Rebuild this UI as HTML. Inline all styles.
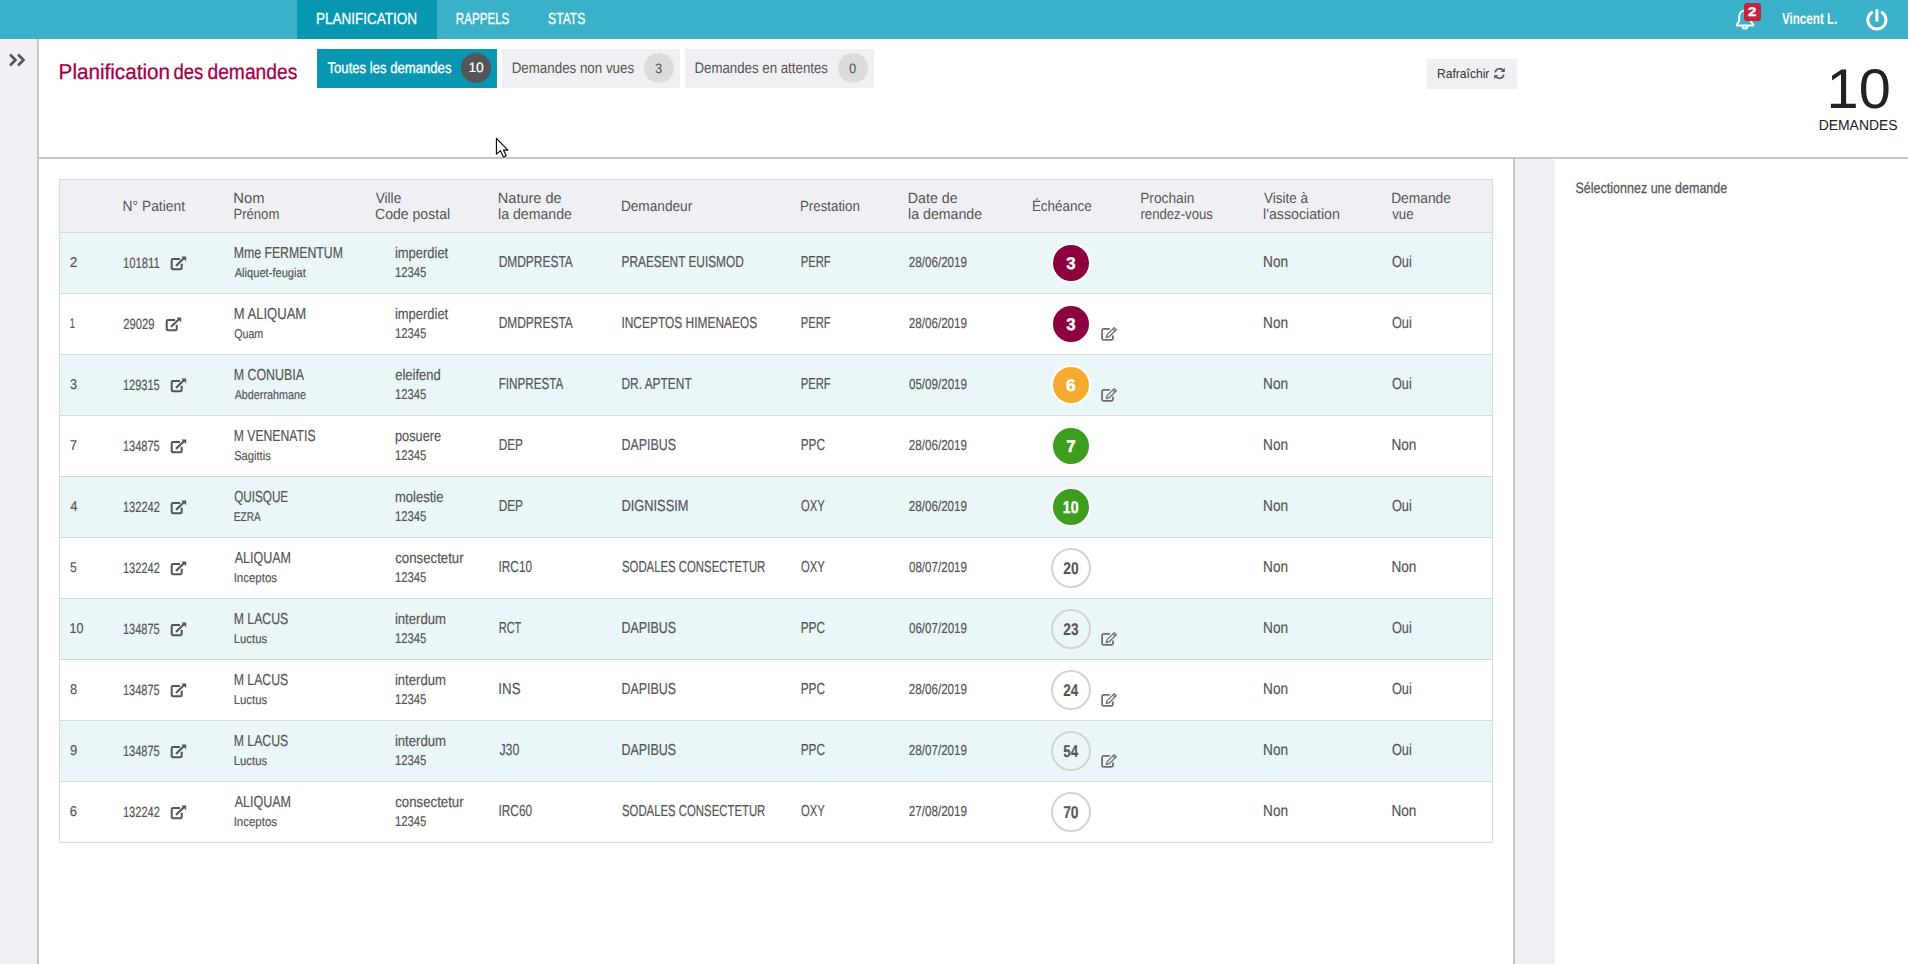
<!DOCTYPE html>
<html><head><meta charset="utf-8"><style>
html,body{margin:0;padding:0;}
body{width:1908px;height:964px;position:relative;overflow:hidden;background:#fff;font-family:"Liberation Sans",sans-serif;}
.b{position:absolute;}
svg.txt{position:absolute;left:0;top:0;}
svg.txt text{font-family:"Liberation Sans",sans-serif;text-rendering:geometricPrecision;}
</style></head><body>
<div class="b" style="left:0px;top:0px;width:1908px;height:39px;background:#3ab1c8;"></div>
<div class="b" style="left:297px;top:0px;width:140px;height:39px;background:#0897b1;"></div>
<div class="b" style="left:0px;top:39px;width:37px;height:925px;background:#f0f0f4;"></div>
<div class="b" style="left:37px;top:39px;width:2px;height:925px;background:#c6c6c6;"></div>
<div class="b" style="left:39px;top:157px;width:1869px;height:2px;background:#c6c6c6;"></div>
<div class="b" style="left:1513px;top:159px;width:2px;height:805px;background:#c6c6c6;"></div>
<div class="b" style="left:1515px;top:159px;width:40px;height:805px;background:#f0f0f4;"></div>
<div class="b" style="left:317px;top:49px;width:180px;height:39px;background:#0897b1;"></div>
<div class="b" style="left:461px;top:53px;width:30px;height:30px;background:#555;border-radius:50%;"></div>
<div class="b" style="left:502px;top:49px;width:178px;height:39px;background:#f0f0f4;"></div>
<div class="b" style="left:644px;top:53px;width:30px;height:30px;background:#dcdcdc;border-radius:50%;"></div>
<div class="b" style="left:685px;top:49px;width:189px;height:39px;background:#f0f0f4;"></div>
<div class="b" style="left:838px;top:53px;width:30px;height:30px;background:#dcdcdc;border-radius:50%;"></div>
<div class="b" style="left:1427px;top:59px;width:90px;height:30px;background:#f0f0f4;"></div>
<div class="b" style="left:59px;top:179px;width:1434px;height:664px;background:#fff;border:1px solid #d8d8dc;box-sizing:border-box;"></div>
<div class="b" style="left:60px;top:180px;width:1432px;height:53px;background:#f0f0f4;"></div>
<div class="b" style="left:60px;top:232px;width:1432px;height:1px;background:#dadadc;"></div>
<div class="b" style="left:60px;top:233px;width:1432px;height:60px;background:#eaf6f7;"></div>
<div class="b" style="left:60px;top:293px;width:1432px;height:1px;background:#d6d9dc;"></div>
<div class="b" style="left:1051px;top:242.7px;width:40px;height:40px;background:#8d003f;border-radius:50%;border:2px solid #fff;box-sizing:border-box;"></div>
<div class="b" style="left:60px;top:354px;width:1432px;height:1px;background:#d6d9dc;"></div>
<div class="b" style="left:1051px;top:303.7px;width:40px;height:40px;background:#8d003f;border-radius:50%;border:2px solid #fff;box-sizing:border-box;"></div>
<div class="b" style="left:60px;top:355px;width:1432px;height:60px;background:#eaf6f7;"></div>
<div class="b" style="left:60px;top:415px;width:1432px;height:1px;background:#d6d9dc;"></div>
<div class="b" style="left:1051px;top:364.7px;width:40px;height:40px;background:#f5ab2f;border-radius:50%;border:2px solid #fff;box-sizing:border-box;"></div>
<div class="b" style="left:60px;top:476px;width:1432px;height:1px;background:#d6d9dc;"></div>
<div class="b" style="left:1051px;top:425.7px;width:40px;height:40px;background:#3c9d1f;border-radius:50%;border:2px solid #fff;box-sizing:border-box;"></div>
<div class="b" style="left:60px;top:477px;width:1432px;height:60px;background:#eaf6f7;"></div>
<div class="b" style="left:60px;top:537px;width:1432px;height:1px;background:#d6d9dc;"></div>
<div class="b" style="left:1051px;top:486.7px;width:40px;height:40px;background:#3c9d1f;border-radius:50%;border:2px solid #fff;box-sizing:border-box;"></div>
<div class="b" style="left:60px;top:598px;width:1432px;height:1px;background:#d6d9dc;"></div>
<div class="b" style="left:1051px;top:547.7px;width:40px;height:40px;background:transparent;border-radius:50%;border:2px solid #d3d3d3;box-sizing:border-box;"></div>
<div class="b" style="left:60px;top:599px;width:1432px;height:60px;background:#eaf6f7;"></div>
<div class="b" style="left:60px;top:659px;width:1432px;height:1px;background:#d6d9dc;"></div>
<div class="b" style="left:1051px;top:608.7px;width:40px;height:40px;background:transparent;border-radius:50%;border:2px solid #d3d3d3;box-sizing:border-box;"></div>
<div class="b" style="left:60px;top:720px;width:1432px;height:1px;background:#d6d9dc;"></div>
<div class="b" style="left:1051px;top:669.7px;width:40px;height:40px;background:transparent;border-radius:50%;border:2px solid #d3d3d3;box-sizing:border-box;"></div>
<div class="b" style="left:60px;top:721px;width:1432px;height:60px;background:#eaf6f7;"></div>
<div class="b" style="left:60px;top:781px;width:1432px;height:1px;background:#d6d9dc;"></div>
<div class="b" style="left:1051px;top:730.7px;width:40px;height:40px;background:transparent;border-radius:50%;border:2px solid #d3d3d3;box-sizing:border-box;"></div>
<div class="b" style="left:1051px;top:791.7px;width:40px;height:40px;background:transparent;border-radius:50%;border:2px solid #d3d3d3;box-sizing:border-box;"></div>
<svg class="b" style="left:1733px;top:5px" width="24" height="25" viewBox="0 0 24 25">
<path d="M12 5.5c-3.6 0-5.8 2.8-5.8 6.3v4.6l-2.4 3.1v1h16.4v-1l-2.4-3.1v-4.6c0-3.5-2.2-6.3-5.8-6.3z" fill="none" stroke="#fff" stroke-width="2" stroke-linejoin="round"/>
<path d="M9.6 21.2a2.4 2.4 0 0 0 4.8 0" fill="none" stroke="#fff" stroke-width="2"/>
</svg>
<div class="b" style="left:1744px;top:3px;width:17px;height:18px;background:#c8203f;border-radius:3px;"></div>
<svg class="b" style="left:1865px;top:8px" width="24" height="24" viewBox="0 0 24 24">
<path d="M6.7 4.5a9.1 9.1 0 1 0 10.4 0" fill="none" stroke="#fff" stroke-width="3" stroke-linecap="round"/>
<line x1="11.9" y1="2.4" x2="11.9" y2="12.2" stroke="#fff" stroke-width="3" stroke-linecap="round"/>
</svg>
<svg class="b" style="left:7px;top:52px" width="20" height="16" viewBox="0 0 20 16">
<path d="M3 2.5l5.5 5.5-5.5 5.5M11 2.5l5.5 5.5-5.5 5.5" fill="none" stroke="#555" stroke-width="2.6"/>
</svg>
<svg class="b" style="left:1493px;top:67px" width="13" height="13" viewBox="0 0 13 13">
<path d="M2.2 5.4A4.4 4.4 0 0 1 10.2 3.6" fill="none" stroke="#555" stroke-width="1.7"/>
<path d="M11.8 1v4h-4z" fill="#555"/>
<path d="M10.8 7.6A4.4 4.4 0 0 1 2.8 9.4" fill="none" stroke="#555" stroke-width="1.7"/>
<path d="M1.2 12v-4h4z" fill="#555"/>
</svg>
<svg class="b" style="left:169.0px;top:256.0px" width="18" height="16" viewBox="0 0 18 16">
<path d="M11 3H3.9a1.2 1.2 0 0 0-1.2 1.2V12a1.2 1.2 0 0 0 1.2 1.2h7.6A1.2 1.2 0 0 0 12.7 12V7.7" fill="none" stroke="#555" stroke-width="2"/>
<path d="M7.6 9.3L14.6 2.4" stroke="#555" stroke-width="2.1" stroke-linecap="round"/>
<path d="M12.4 0.5H17.2V5.3Z" fill="#555"/>
</svg>
<svg class="b" style="left:163.7px;top:317.0px" width="18" height="16" viewBox="0 0 18 16">
<path d="M11 3H3.9a1.2 1.2 0 0 0-1.2 1.2V12a1.2 1.2 0 0 0 1.2 1.2h7.6A1.2 1.2 0 0 0 12.7 12V7.7" fill="none" stroke="#555" stroke-width="2"/>
<path d="M7.6 9.3L14.6 2.4" stroke="#555" stroke-width="2.1" stroke-linecap="round"/>
<path d="M12.4 0.5H17.2V5.3Z" fill="#555"/>
</svg>
<svg class="b" style="left:1099.2px;top:326.0px" width="18" height="16" viewBox="0 0 18 16">
<path d="M10.8 2.9H4.6a1.5 1.5 0 0 0-1.5 1.5v7.9a1.5 1.5 0 0 0 1.5 1.5h7.9a1.5 1.5 0 0 0 1.5-1.5V9.4" fill="none" stroke="#707070" stroke-width="1.8"/>
<path d="M8.1 8.6L15.2 1.6L17.3 3.7L10.2 10.7L7.3 11.5Z" fill="none" stroke="#707070" stroke-width="1.3" stroke-linejoin="round"/>
<path d="M13.9 3L16 5.1" stroke="#707070" stroke-width="1.1"/>
</svg>
<svg class="b" style="left:169.0px;top:378.0px" width="18" height="16" viewBox="0 0 18 16">
<path d="M11 3H3.9a1.2 1.2 0 0 0-1.2 1.2V12a1.2 1.2 0 0 0 1.2 1.2h7.6A1.2 1.2 0 0 0 12.7 12V7.7" fill="none" stroke="#555" stroke-width="2"/>
<path d="M7.6 9.3L14.6 2.4" stroke="#555" stroke-width="2.1" stroke-linecap="round"/>
<path d="M12.4 0.5H17.2V5.3Z" fill="#555"/>
</svg>
<svg class="b" style="left:1099.2px;top:387.0px" width="18" height="16" viewBox="0 0 18 16">
<path d="M10.8 2.9H4.6a1.5 1.5 0 0 0-1.5 1.5v7.9a1.5 1.5 0 0 0 1.5 1.5h7.9a1.5 1.5 0 0 0 1.5-1.5V9.4" fill="none" stroke="#707070" stroke-width="1.8"/>
<path d="M8.1 8.6L15.2 1.6L17.3 3.7L10.2 10.7L7.3 11.5Z" fill="none" stroke="#707070" stroke-width="1.3" stroke-linejoin="round"/>
<path d="M13.9 3L16 5.1" stroke="#707070" stroke-width="1.1"/>
</svg>
<svg class="b" style="left:169.0px;top:439.0px" width="18" height="16" viewBox="0 0 18 16">
<path d="M11 3H3.9a1.2 1.2 0 0 0-1.2 1.2V12a1.2 1.2 0 0 0 1.2 1.2h7.6A1.2 1.2 0 0 0 12.7 12V7.7" fill="none" stroke="#555" stroke-width="2"/>
<path d="M7.6 9.3L14.6 2.4" stroke="#555" stroke-width="2.1" stroke-linecap="round"/>
<path d="M12.4 0.5H17.2V5.3Z" fill="#555"/>
</svg>
<svg class="b" style="left:169.0px;top:500.0px" width="18" height="16" viewBox="0 0 18 16">
<path d="M11 3H3.9a1.2 1.2 0 0 0-1.2 1.2V12a1.2 1.2 0 0 0 1.2 1.2h7.6A1.2 1.2 0 0 0 12.7 12V7.7" fill="none" stroke="#555" stroke-width="2"/>
<path d="M7.6 9.3L14.6 2.4" stroke="#555" stroke-width="2.1" stroke-linecap="round"/>
<path d="M12.4 0.5H17.2V5.3Z" fill="#555"/>
</svg>
<svg class="b" style="left:169.0px;top:561.0px" width="18" height="16" viewBox="0 0 18 16">
<path d="M11 3H3.9a1.2 1.2 0 0 0-1.2 1.2V12a1.2 1.2 0 0 0 1.2 1.2h7.6A1.2 1.2 0 0 0 12.7 12V7.7" fill="none" stroke="#555" stroke-width="2"/>
<path d="M7.6 9.3L14.6 2.4" stroke="#555" stroke-width="2.1" stroke-linecap="round"/>
<path d="M12.4 0.5H17.2V5.3Z" fill="#555"/>
</svg>
<svg class="b" style="left:169.0px;top:622.0px" width="18" height="16" viewBox="0 0 18 16">
<path d="M11 3H3.9a1.2 1.2 0 0 0-1.2 1.2V12a1.2 1.2 0 0 0 1.2 1.2h7.6A1.2 1.2 0 0 0 12.7 12V7.7" fill="none" stroke="#555" stroke-width="2"/>
<path d="M7.6 9.3L14.6 2.4" stroke="#555" stroke-width="2.1" stroke-linecap="round"/>
<path d="M12.4 0.5H17.2V5.3Z" fill="#555"/>
</svg>
<svg class="b" style="left:1099.2px;top:631.0px" width="18" height="16" viewBox="0 0 18 16">
<path d="M10.8 2.9H4.6a1.5 1.5 0 0 0-1.5 1.5v7.9a1.5 1.5 0 0 0 1.5 1.5h7.9a1.5 1.5 0 0 0 1.5-1.5V9.4" fill="none" stroke="#707070" stroke-width="1.8"/>
<path d="M8.1 8.6L15.2 1.6L17.3 3.7L10.2 10.7L7.3 11.5Z" fill="none" stroke="#707070" stroke-width="1.3" stroke-linejoin="round"/>
<path d="M13.9 3L16 5.1" stroke="#707070" stroke-width="1.1"/>
</svg>
<svg class="b" style="left:169.0px;top:683.0px" width="18" height="16" viewBox="0 0 18 16">
<path d="M11 3H3.9a1.2 1.2 0 0 0-1.2 1.2V12a1.2 1.2 0 0 0 1.2 1.2h7.6A1.2 1.2 0 0 0 12.7 12V7.7" fill="none" stroke="#555" stroke-width="2"/>
<path d="M7.6 9.3L14.6 2.4" stroke="#555" stroke-width="2.1" stroke-linecap="round"/>
<path d="M12.4 0.5H17.2V5.3Z" fill="#555"/>
</svg>
<svg class="b" style="left:1099.2px;top:692.0px" width="18" height="16" viewBox="0 0 18 16">
<path d="M10.8 2.9H4.6a1.5 1.5 0 0 0-1.5 1.5v7.9a1.5 1.5 0 0 0 1.5 1.5h7.9a1.5 1.5 0 0 0 1.5-1.5V9.4" fill="none" stroke="#707070" stroke-width="1.8"/>
<path d="M8.1 8.6L15.2 1.6L17.3 3.7L10.2 10.7L7.3 11.5Z" fill="none" stroke="#707070" stroke-width="1.3" stroke-linejoin="round"/>
<path d="M13.9 3L16 5.1" stroke="#707070" stroke-width="1.1"/>
</svg>
<svg class="b" style="left:169.0px;top:744.0px" width="18" height="16" viewBox="0 0 18 16">
<path d="M11 3H3.9a1.2 1.2 0 0 0-1.2 1.2V12a1.2 1.2 0 0 0 1.2 1.2h7.6A1.2 1.2 0 0 0 12.7 12V7.7" fill="none" stroke="#555" stroke-width="2"/>
<path d="M7.6 9.3L14.6 2.4" stroke="#555" stroke-width="2.1" stroke-linecap="round"/>
<path d="M12.4 0.5H17.2V5.3Z" fill="#555"/>
</svg>
<svg class="b" style="left:1099.2px;top:753.0px" width="18" height="16" viewBox="0 0 18 16">
<path d="M10.8 2.9H4.6a1.5 1.5 0 0 0-1.5 1.5v7.9a1.5 1.5 0 0 0 1.5 1.5h7.9a1.5 1.5 0 0 0 1.5-1.5V9.4" fill="none" stroke="#707070" stroke-width="1.8"/>
<path d="M8.1 8.6L15.2 1.6L17.3 3.7L10.2 10.7L7.3 11.5Z" fill="none" stroke="#707070" stroke-width="1.3" stroke-linejoin="round"/>
<path d="M13.9 3L16 5.1" stroke="#707070" stroke-width="1.1"/>
</svg>
<svg class="b" style="left:169.0px;top:805.0px" width="18" height="16" viewBox="0 0 18 16">
<path d="M11 3H3.9a1.2 1.2 0 0 0-1.2 1.2V12a1.2 1.2 0 0 0 1.2 1.2h7.6A1.2 1.2 0 0 0 12.7 12V7.7" fill="none" stroke="#555" stroke-width="2"/>
<path d="M7.6 9.3L14.6 2.4" stroke="#555" stroke-width="2.1" stroke-linecap="round"/>
<path d="M12.4 0.5H17.2V5.3Z" fill="#555"/>
</svg>
<svg class="b" style="left:495px;top:137px" width="16" height="22" viewBox="0 0 16 22">
<path d="M1.4 1.3V17.2L5.5 13.7L8.5 19.9L11.3 18.7L8.4 13.1H12.9Z" fill="#fff" stroke="#000" stroke-width="1.1" stroke-linejoin="round"/>
</svg>
<svg class="txt" width="1908" height="964" viewBox="0 0 1908 964">
<text x="316.10" y="24.30" font-size="16.00" fill="#fff" textLength="100.99" lengthAdjust="spacingAndGlyphs" stroke="#fff" stroke-width="0.30">PLANIFICATION</text>
<text x="455.85" y="24.30" font-size="16.00" fill="#fff" textLength="53.48" lengthAdjust="spacingAndGlyphs" stroke="#fff" stroke-width="0.30">RAPPELS</text>
<text x="548.08" y="24.30" font-size="16.00" fill="#fff" textLength="37.26" lengthAdjust="spacingAndGlyphs" stroke="#fff" stroke-width="0.30">STATS</text>
<text x="1748.08" y="15.80" font-size="12.50" fill="#fff" textLength="8.32" lengthAdjust="spacingAndGlyphs" font-weight="bold" stroke="#fff" stroke-width="0.50">2</text>
<text x="1781.92" y="24.10" font-size="16.00" fill="#fff" textLength="55.58" lengthAdjust="spacingAndGlyphs" font-weight="bold">Vincent L.</text>
<text x="58.61" y="78.90" font-size="21.50" fill="#a3004a" textLength="111.33" lengthAdjust="spacingAndGlyphs" stroke="#a3004a" stroke-width="0.30">Planification</text>
<text x="173.42" y="78.90" font-size="21.50" fill="#a3004a" textLength="29.85" lengthAdjust="spacingAndGlyphs" stroke="#a3004a" stroke-width="0.30">des</text>
<text x="207.49" y="78.90" font-size="21.50" fill="#a3004a" textLength="89.80" lengthAdjust="spacingAndGlyphs" stroke="#a3004a" stroke-width="0.30">demandes</text>
<text x="327.51" y="72.90" font-size="15.50" fill="#fff" textLength="123.96" lengthAdjust="spacingAndGlyphs" stroke="#fff" stroke-width="0.35">Toutes les demandes</text>
<text x="468.45" y="72.30" font-size="13.50" fill="#fff" textLength="15.39" lengthAdjust="spacingAndGlyphs" stroke="#fff" stroke-width="0.20">10</text>
<text x="511.71" y="72.90" font-size="15.30" fill="#555" textLength="122.38" lengthAdjust="spacingAndGlyphs">Demandes non vues</text>
<text x="655.00" y="72.50" font-size="13.50" fill="#555" textLength="7.27" lengthAdjust="spacingAndGlyphs">3</text>
<text x="694.41" y="72.90" font-size="15.30" fill="#555" textLength="133.57" lengthAdjust="spacingAndGlyphs">Demandes en attentes</text>
<text x="848.99" y="72.50" font-size="13.50" fill="#555" textLength="7.21" lengthAdjust="spacingAndGlyphs">0</text>
<text x="1437.01" y="78.00" font-size="13.00" fill="#333" textLength="52.39" lengthAdjust="spacingAndGlyphs">Rafraîchir</text>
<text x="1826.60" y="108.00" font-size="56.00" fill="#222" textLength="64.26" lengthAdjust="spacingAndGlyphs">10</text>
<text x="1818.66" y="130.00" font-size="14.50" fill="#222" textLength="78.98" lengthAdjust="spacingAndGlyphs">DEMANDES</text>
<text x="1575.43" y="192.70" font-size="15.00" fill="#555" textLength="151.83" lengthAdjust="spacingAndGlyphs" stroke="#555" stroke-width="0.25">Sélectionnez une demande</text>
<text x="122.57" y="211.20" font-size="14.80" fill="#555" textLength="62.44" lengthAdjust="spacingAndGlyphs">N° Patient</text>
<text x="233.29" y="203.30" font-size="14.80" fill="#555" textLength="31.19" lengthAdjust="spacingAndGlyphs">Nom</text>
<text x="233.42" y="219.30" font-size="14.80" fill="#555" textLength="45.94" lengthAdjust="spacingAndGlyphs">Prénom</text>
<text x="375.64" y="203.30" font-size="14.80" fill="#555" textLength="25.66" lengthAdjust="spacingAndGlyphs">Ville</text>
<text x="374.98" y="219.30" font-size="14.80" fill="#555" textLength="75.16" lengthAdjust="spacingAndGlyphs">Code postal</text>
<text x="497.81" y="203.30" font-size="14.80" fill="#555" textLength="63.84" lengthAdjust="spacingAndGlyphs">Nature de</text>
<text x="498.05" y="219.30" font-size="14.80" fill="#555" textLength="73.88" lengthAdjust="spacingAndGlyphs">la demande</text>
<text x="620.88" y="211.20" font-size="14.80" fill="#555" textLength="71.35" lengthAdjust="spacingAndGlyphs">Demandeur</text>
<text x="799.91" y="211.20" font-size="14.80" fill="#555" textLength="59.96" lengthAdjust="spacingAndGlyphs">Prestation</text>
<text x="907.83" y="203.30" font-size="14.80" fill="#555" textLength="49.80" lengthAdjust="spacingAndGlyphs">Date de</text>
<text x="908.04" y="219.30" font-size="14.80" fill="#555" textLength="74.09" lengthAdjust="spacingAndGlyphs">la demande</text>
<text x="1031.90" y="211.20" font-size="14.80" fill="#555" textLength="59.90" lengthAdjust="spacingAndGlyphs">Échéance</text>
<text x="1140.17" y="203.30" font-size="14.80" fill="#555" textLength="54.32" lengthAdjust="spacingAndGlyphs">Prochain</text>
<text x="1140.42" y="219.30" font-size="14.80" fill="#555" textLength="72.55" lengthAdjust="spacingAndGlyphs">rendez-vous</text>
<text x="1263.94" y="203.30" font-size="14.80" fill="#555" textLength="44.06" lengthAdjust="spacingAndGlyphs">Visite à</text>
<text x="1263.04" y="219.30" font-size="14.80" fill="#555" textLength="76.88" lengthAdjust="spacingAndGlyphs">l'association</text>
<text x="1391.17" y="203.30" font-size="14.80" fill="#555" textLength="59.74" lengthAdjust="spacingAndGlyphs">Demande</text>
<text x="1392.25" y="219.30" font-size="14.80" fill="#555" textLength="21.33" lengthAdjust="spacingAndGlyphs">vue</text>
<text x="69.82" y="267.10" font-size="14.20" fill="#555" textLength="7.57" lengthAdjust="spacingAndGlyphs" stroke="#555" stroke-width="0.18">2</text>
<text x="122.96" y="268.00" font-size="14.80" fill="#555" textLength="36.88" lengthAdjust="spacingAndGlyphs" stroke="#555" stroke-width="0.18">101811</text>
<text x="233.69" y="257.60" font-size="16.00" fill="#555" textLength="109.22" lengthAdjust="spacingAndGlyphs" stroke="#555" stroke-width="0.18">Mme FERMENTUM</text>
<text x="234.68" y="277.10" font-size="12.80" fill="#555" textLength="71.10" lengthAdjust="spacingAndGlyphs" stroke="#555" stroke-width="0.18">Aliquet-feugiat</text>
<text x="394.93" y="257.60" font-size="15.30" fill="#555" textLength="53.26" lengthAdjust="spacingAndGlyphs" stroke="#555" stroke-width="0.18">imperdiet</text>
<text x="394.94" y="277.10" font-size="14.20" fill="#555" textLength="31.33" lengthAdjust="spacingAndGlyphs" stroke="#555" stroke-width="0.18">12345</text>
<text x="498.63" y="267.10" font-size="16.00" fill="#555" textLength="74.19" lengthAdjust="spacingAndGlyphs" stroke="#555" stroke-width="0.18">DMDPRESTA</text>
<text x="621.53" y="267.10" font-size="16.00" fill="#555" textLength="122.24" lengthAdjust="spacingAndGlyphs" stroke="#555" stroke-width="0.18">PRAESENT EUISMOD</text>
<text x="800.68" y="267.10" font-size="16.00" fill="#555" textLength="29.97" lengthAdjust="spacingAndGlyphs" stroke="#555" stroke-width="0.18">PERF</text>
<text x="908.81" y="267.10" font-size="14.50" fill="#555" textLength="58.24" lengthAdjust="spacingAndGlyphs" stroke="#555" stroke-width="0.18">28/06/2019</text>
<text x="1066.31" y="268.80" font-size="17.00" fill="#fff" textLength="9.40" lengthAdjust="spacingAndGlyphs" font-weight="bold" stroke="#fff" stroke-width="0.40">3</text>
<text x="1263.08" y="267.10" font-size="16.00" fill="#555" textLength="25.00" lengthAdjust="spacingAndGlyphs" stroke="#555" stroke-width="0.18">Non</text>
<text x="1391.90" y="267.10" font-size="16.00" fill="#555" textLength="19.86" lengthAdjust="spacingAndGlyphs" stroke="#555" stroke-width="0.18">Oui</text>
<text x="69.79" y="328.10" font-size="14.20" fill="#555" textLength="5.16" lengthAdjust="spacingAndGlyphs" stroke="#555" stroke-width="0.18">1</text>
<text x="123.23" y="329.00" font-size="14.80" fill="#555" textLength="31.30" lengthAdjust="spacingAndGlyphs" stroke="#555" stroke-width="0.18">29029</text>
<text x="233.64" y="318.60" font-size="16.00" fill="#555" textLength="72.62" lengthAdjust="spacingAndGlyphs" stroke="#555" stroke-width="0.18">M ALIQUAM</text>
<text x="234.20" y="338.10" font-size="12.80" fill="#555" textLength="29.01" lengthAdjust="spacingAndGlyphs" stroke="#555" stroke-width="0.18">Quam</text>
<text x="394.93" y="318.60" font-size="15.30" fill="#555" textLength="53.26" lengthAdjust="spacingAndGlyphs" stroke="#555" stroke-width="0.18">imperdiet</text>
<text x="394.94" y="338.10" font-size="14.20" fill="#555" textLength="31.33" lengthAdjust="spacingAndGlyphs" stroke="#555" stroke-width="0.18">12345</text>
<text x="498.63" y="328.10" font-size="16.00" fill="#555" textLength="74.19" lengthAdjust="spacingAndGlyphs" stroke="#555" stroke-width="0.18">DMDPRESTA</text>
<text x="621.40" y="328.10" font-size="16.00" fill="#555" textLength="135.85" lengthAdjust="spacingAndGlyphs" stroke="#555" stroke-width="0.18">INCEPTOS HIMENAEOS</text>
<text x="800.68" y="328.10" font-size="16.00" fill="#555" textLength="29.97" lengthAdjust="spacingAndGlyphs" stroke="#555" stroke-width="0.18">PERF</text>
<text x="908.81" y="328.10" font-size="14.50" fill="#555" textLength="58.24" lengthAdjust="spacingAndGlyphs" stroke="#555" stroke-width="0.18">28/06/2019</text>
<text x="1066.31" y="329.80" font-size="17.00" fill="#fff" textLength="9.40" lengthAdjust="spacingAndGlyphs" font-weight="bold" stroke="#fff" stroke-width="0.40">3</text>
<text x="1263.08" y="328.10" font-size="16.00" fill="#555" textLength="25.00" lengthAdjust="spacingAndGlyphs" stroke="#555" stroke-width="0.18">Non</text>
<text x="1391.90" y="328.10" font-size="16.00" fill="#555" textLength="19.86" lengthAdjust="spacingAndGlyphs" stroke="#555" stroke-width="0.18">Oui</text>
<text x="70.02" y="389.10" font-size="14.20" fill="#555" textLength="7.04" lengthAdjust="spacingAndGlyphs" stroke="#555" stroke-width="0.18">3</text>
<text x="122.96" y="390.00" font-size="14.80" fill="#555" textLength="36.80" lengthAdjust="spacingAndGlyphs" stroke="#555" stroke-width="0.18">129315</text>
<text x="233.68" y="379.60" font-size="16.00" fill="#555" textLength="70.34" lengthAdjust="spacingAndGlyphs" stroke="#555" stroke-width="0.18">M CONUBIA</text>
<text x="234.68" y="399.10" font-size="12.80" fill="#555" textLength="71.30" lengthAdjust="spacingAndGlyphs" stroke="#555" stroke-width="0.18">Abderrahmane</text>
<text x="395.25" y="379.60" font-size="15.30" fill="#555" textLength="45.39" lengthAdjust="spacingAndGlyphs" stroke="#555" stroke-width="0.18">eleifend</text>
<text x="394.94" y="399.10" font-size="14.20" fill="#555" textLength="31.33" lengthAdjust="spacingAndGlyphs" stroke="#555" stroke-width="0.18">12345</text>
<text x="498.65" y="389.10" font-size="16.00" fill="#555" textLength="64.67" lengthAdjust="spacingAndGlyphs" stroke="#555" stroke-width="0.18">FINPRESTA</text>
<text x="621.53" y="389.10" font-size="16.00" fill="#555" textLength="70.14" lengthAdjust="spacingAndGlyphs" stroke="#555" stroke-width="0.18">DR. APTENT</text>
<text x="800.68" y="389.10" font-size="16.00" fill="#555" textLength="29.97" lengthAdjust="spacingAndGlyphs" stroke="#555" stroke-width="0.18">PERF</text>
<text x="908.95" y="389.10" font-size="14.50" fill="#555" textLength="58.10" lengthAdjust="spacingAndGlyphs" stroke="#555" stroke-width="0.18">05/09/2019</text>
<text x="1066.06" y="390.80" font-size="17.00" fill="#fff" textLength="9.66" lengthAdjust="spacingAndGlyphs" font-weight="bold" stroke="#fff" stroke-width="0.40">6</text>
<text x="1263.08" y="389.10" font-size="16.00" fill="#555" textLength="25.00" lengthAdjust="spacingAndGlyphs" stroke="#555" stroke-width="0.18">Non</text>
<text x="1391.90" y="389.10" font-size="16.00" fill="#555" textLength="19.86" lengthAdjust="spacingAndGlyphs" stroke="#555" stroke-width="0.18">Oui</text>
<text x="69.82" y="450.10" font-size="14.20" fill="#555" textLength="7.34" lengthAdjust="spacingAndGlyphs" stroke="#555" stroke-width="0.18">7</text>
<text x="122.96" y="451.00" font-size="14.80" fill="#555" textLength="36.80" lengthAdjust="spacingAndGlyphs" stroke="#555" stroke-width="0.18">134875</text>
<text x="233.71" y="440.60" font-size="16.00" fill="#555" textLength="81.84" lengthAdjust="spacingAndGlyphs" stroke="#555" stroke-width="0.18">M VENENATIS</text>
<text x="234.19" y="460.10" font-size="12.80" fill="#555" textLength="36.51" lengthAdjust="spacingAndGlyphs" stroke="#555" stroke-width="0.18">Sagittis</text>
<text x="394.98" y="440.60" font-size="15.30" fill="#555" textLength="46.09" lengthAdjust="spacingAndGlyphs" stroke="#555" stroke-width="0.18">posuere</text>
<text x="394.94" y="460.10" font-size="14.20" fill="#555" textLength="31.33" lengthAdjust="spacingAndGlyphs" stroke="#555" stroke-width="0.18">12345</text>
<text x="498.63" y="450.10" font-size="16.00" fill="#555" textLength="24.40" lengthAdjust="spacingAndGlyphs" stroke="#555" stroke-width="0.18">DEP</text>
<text x="621.48" y="450.10" font-size="16.00" fill="#555" textLength="54.69" lengthAdjust="spacingAndGlyphs" stroke="#555" stroke-width="0.18">DAPIBUS</text>
<text x="800.63" y="450.10" font-size="16.00" fill="#555" textLength="24.43" lengthAdjust="spacingAndGlyphs" stroke="#555" stroke-width="0.18">PPC</text>
<text x="908.81" y="450.10" font-size="14.50" fill="#555" textLength="58.24" lengthAdjust="spacingAndGlyphs" stroke="#555" stroke-width="0.18">28/06/2019</text>
<text x="1066.17" y="451.80" font-size="17.00" fill="#fff" textLength="9.48" lengthAdjust="spacingAndGlyphs" font-weight="bold" stroke="#fff" stroke-width="0.40">7</text>
<text x="1263.08" y="450.10" font-size="16.00" fill="#555" textLength="25.00" lengthAdjust="spacingAndGlyphs" stroke="#555" stroke-width="0.18">Non</text>
<text x="1391.38" y="450.10" font-size="16.00" fill="#555" textLength="25.00" lengthAdjust="spacingAndGlyphs" stroke="#555" stroke-width="0.18">Non</text>
<text x="70.20" y="511.10" font-size="14.20" fill="#555" textLength="7.17" lengthAdjust="spacingAndGlyphs" stroke="#555" stroke-width="0.18">4</text>
<text x="122.96" y="512.00" font-size="14.80" fill="#555" textLength="36.90" lengthAdjust="spacingAndGlyphs" stroke="#555" stroke-width="0.18">132242</text>
<text x="234.14" y="501.60" font-size="16.00" fill="#555" textLength="54.06" lengthAdjust="spacingAndGlyphs" stroke="#555" stroke-width="0.18">QUISQUE</text>
<text x="233.87" y="521.10" font-size="12.80" fill="#555" textLength="26.85" lengthAdjust="spacingAndGlyphs" stroke="#555" stroke-width="0.18">EZRA</text>
<text x="394.94" y="501.60" font-size="15.30" fill="#555" textLength="48.44" lengthAdjust="spacingAndGlyphs" stroke="#555" stroke-width="0.18">molestie</text>
<text x="394.94" y="521.10" font-size="14.20" fill="#555" textLength="31.33" lengthAdjust="spacingAndGlyphs" stroke="#555" stroke-width="0.18">12345</text>
<text x="498.63" y="511.10" font-size="16.00" fill="#555" textLength="24.40" lengthAdjust="spacingAndGlyphs" stroke="#555" stroke-width="0.18">DEP</text>
<text x="621.45" y="511.10" font-size="16.00" fill="#555" textLength="67.00" lengthAdjust="spacingAndGlyphs" stroke="#555" stroke-width="0.18">DIGNISSIM</text>
<text x="801.07" y="511.10" font-size="16.00" fill="#555" textLength="23.78" lengthAdjust="spacingAndGlyphs" stroke="#555" stroke-width="0.18">OXY</text>
<text x="908.81" y="511.10" font-size="14.50" fill="#555" textLength="58.24" lengthAdjust="spacingAndGlyphs" stroke="#555" stroke-width="0.18">28/06/2019</text>
<text x="1062.86" y="512.80" font-size="17.00" fill="#fff" textLength="15.78" lengthAdjust="spacingAndGlyphs" font-weight="bold" stroke="#fff" stroke-width="0.40">10</text>
<text x="1263.08" y="511.10" font-size="16.00" fill="#555" textLength="25.00" lengthAdjust="spacingAndGlyphs" stroke="#555" stroke-width="0.18">Non</text>
<text x="1391.90" y="511.10" font-size="16.00" fill="#555" textLength="19.86" lengthAdjust="spacingAndGlyphs" stroke="#555" stroke-width="0.18">Oui</text>
<text x="70.01" y="572.10" font-size="14.20" fill="#555" textLength="6.80" lengthAdjust="spacingAndGlyphs" stroke="#555" stroke-width="0.18">5</text>
<text x="122.96" y="573.00" font-size="14.80" fill="#555" textLength="36.90" lengthAdjust="spacingAndGlyphs" stroke="#555" stroke-width="0.18">132242</text>
<text x="234.68" y="562.60" font-size="16.00" fill="#555" textLength="56.35" lengthAdjust="spacingAndGlyphs" stroke="#555" stroke-width="0.18">ALIQUAM</text>
<text x="233.64" y="582.10" font-size="12.80" fill="#555" textLength="43.48" lengthAdjust="spacingAndGlyphs" stroke="#555" stroke-width="0.18">Inceptos</text>
<text x="395.24" y="562.60" font-size="15.30" fill="#555" textLength="68.38" lengthAdjust="spacingAndGlyphs" stroke="#555" stroke-width="0.18">consectetur</text>
<text x="394.94" y="582.10" font-size="14.20" fill="#555" textLength="31.33" lengthAdjust="spacingAndGlyphs" stroke="#555" stroke-width="0.18">12345</text>
<text x="498.51" y="572.10" font-size="16.00" fill="#555" textLength="33.55" lengthAdjust="spacingAndGlyphs" stroke="#555" stroke-width="0.18">IRC10</text>
<text x="621.98" y="572.10" font-size="16.00" fill="#555" textLength="143.34" lengthAdjust="spacingAndGlyphs" stroke="#555" stroke-width="0.18">SODALES CONSECTETUR</text>
<text x="801.07" y="572.10" font-size="16.00" fill="#555" textLength="23.78" lengthAdjust="spacingAndGlyphs" stroke="#555" stroke-width="0.18">OXY</text>
<text x="908.95" y="572.10" font-size="14.50" fill="#555" textLength="58.10" lengthAdjust="spacingAndGlyphs" stroke="#555" stroke-width="0.18">08/07/2019</text>
<text x="1063.27" y="573.80" font-size="17.00" fill="#555" textLength="15.34" lengthAdjust="spacingAndGlyphs" font-weight="bold" stroke="#555" stroke-width="0.10">20</text>
<text x="1263.08" y="572.10" font-size="16.00" fill="#555" textLength="25.00" lengthAdjust="spacingAndGlyphs" stroke="#555" stroke-width="0.18">Non</text>
<text x="1391.38" y="572.10" font-size="16.00" fill="#555" textLength="25.00" lengthAdjust="spacingAndGlyphs" stroke="#555" stroke-width="0.18">Non</text>
<text x="69.55" y="633.10" font-size="14.20" fill="#555" textLength="13.83" lengthAdjust="spacingAndGlyphs" stroke="#555" stroke-width="0.18">10</text>
<text x="122.96" y="634.00" font-size="14.80" fill="#555" textLength="36.80" lengthAdjust="spacingAndGlyphs" stroke="#555" stroke-width="0.18">134875</text>
<text x="233.69" y="623.60" font-size="16.00" fill="#555" textLength="54.57" lengthAdjust="spacingAndGlyphs" stroke="#555" stroke-width="0.18">M LACUS</text>
<text x="233.77" y="643.10" font-size="12.80" fill="#555" textLength="33.34" lengthAdjust="spacingAndGlyphs" stroke="#555" stroke-width="0.18">Luctus</text>
<text x="394.92" y="623.60" font-size="15.30" fill="#555" textLength="51.04" lengthAdjust="spacingAndGlyphs" stroke="#555" stroke-width="0.18">interdum</text>
<text x="394.94" y="643.10" font-size="14.20" fill="#555" textLength="31.33" lengthAdjust="spacingAndGlyphs" stroke="#555" stroke-width="0.18">12345</text>
<text x="498.70" y="633.10" font-size="16.00" fill="#555" textLength="22.66" lengthAdjust="spacingAndGlyphs" stroke="#555" stroke-width="0.18">RCT</text>
<text x="621.48" y="633.10" font-size="16.00" fill="#555" textLength="54.69" lengthAdjust="spacingAndGlyphs" stroke="#555" stroke-width="0.18">DAPIBUS</text>
<text x="800.63" y="633.10" font-size="16.00" fill="#555" textLength="24.43" lengthAdjust="spacingAndGlyphs" stroke="#555" stroke-width="0.18">PPC</text>
<text x="908.95" y="633.10" font-size="14.50" fill="#555" textLength="58.10" lengthAdjust="spacingAndGlyphs" stroke="#555" stroke-width="0.18">06/07/2019</text>
<text x="1063.27" y="634.80" font-size="17.00" fill="#555" textLength="15.27" lengthAdjust="spacingAndGlyphs" font-weight="bold" stroke="#555" stroke-width="0.10">23</text>
<text x="1263.08" y="633.10" font-size="16.00" fill="#555" textLength="25.00" lengthAdjust="spacingAndGlyphs" stroke="#555" stroke-width="0.18">Non</text>
<text x="1391.90" y="633.10" font-size="16.00" fill="#555" textLength="19.86" lengthAdjust="spacingAndGlyphs" stroke="#555" stroke-width="0.18">Oui</text>
<text x="69.94" y="694.10" font-size="14.20" fill="#555" textLength="7.11" lengthAdjust="spacingAndGlyphs" stroke="#555" stroke-width="0.18">8</text>
<text x="122.96" y="695.00" font-size="14.80" fill="#555" textLength="36.80" lengthAdjust="spacingAndGlyphs" stroke="#555" stroke-width="0.18">134875</text>
<text x="233.69" y="684.60" font-size="16.00" fill="#555" textLength="54.57" lengthAdjust="spacingAndGlyphs" stroke="#555" stroke-width="0.18">M LACUS</text>
<text x="233.77" y="704.10" font-size="12.80" fill="#555" textLength="33.34" lengthAdjust="spacingAndGlyphs" stroke="#555" stroke-width="0.18">Luctus</text>
<text x="394.92" y="684.60" font-size="15.30" fill="#555" textLength="51.04" lengthAdjust="spacingAndGlyphs" stroke="#555" stroke-width="0.18">interdum</text>
<text x="394.94" y="704.10" font-size="14.20" fill="#555" textLength="31.33" lengthAdjust="spacingAndGlyphs" stroke="#555" stroke-width="0.18">12345</text>
<text x="498.37" y="694.10" font-size="16.00" fill="#555" textLength="22.13" lengthAdjust="spacingAndGlyphs" stroke="#555" stroke-width="0.18">INS</text>
<text x="621.48" y="694.10" font-size="16.00" fill="#555" textLength="54.69" lengthAdjust="spacingAndGlyphs" stroke="#555" stroke-width="0.18">DAPIBUS</text>
<text x="800.63" y="694.10" font-size="16.00" fill="#555" textLength="24.43" lengthAdjust="spacingAndGlyphs" stroke="#555" stroke-width="0.18">PPC</text>
<text x="908.81" y="694.10" font-size="14.50" fill="#555" textLength="58.24" lengthAdjust="spacingAndGlyphs" stroke="#555" stroke-width="0.18">28/06/2019</text>
<text x="1063.18" y="695.80" font-size="17.00" fill="#555" textLength="15.04" lengthAdjust="spacingAndGlyphs" font-weight="bold" stroke="#555" stroke-width="0.10">24</text>
<text x="1263.08" y="694.10" font-size="16.00" fill="#555" textLength="25.00" lengthAdjust="spacingAndGlyphs" stroke="#555" stroke-width="0.18">Non</text>
<text x="1391.90" y="694.10" font-size="16.00" fill="#555" textLength="19.86" lengthAdjust="spacingAndGlyphs" stroke="#555" stroke-width="0.18">Oui</text>
<text x="69.89" y="755.10" font-size="14.20" fill="#555" textLength="7.22" lengthAdjust="spacingAndGlyphs" stroke="#555" stroke-width="0.18">9</text>
<text x="122.96" y="756.00" font-size="14.80" fill="#555" textLength="36.80" lengthAdjust="spacingAndGlyphs" stroke="#555" stroke-width="0.18">134875</text>
<text x="233.69" y="745.60" font-size="16.00" fill="#555" textLength="54.57" lengthAdjust="spacingAndGlyphs" stroke="#555" stroke-width="0.18">M LACUS</text>
<text x="233.77" y="765.10" font-size="12.80" fill="#555" textLength="33.34" lengthAdjust="spacingAndGlyphs" stroke="#555" stroke-width="0.18">Luctus</text>
<text x="394.92" y="745.60" font-size="15.30" fill="#555" textLength="51.04" lengthAdjust="spacingAndGlyphs" stroke="#555" stroke-width="0.18">interdum</text>
<text x="394.94" y="765.10" font-size="14.20" fill="#555" textLength="31.33" lengthAdjust="spacingAndGlyphs" stroke="#555" stroke-width="0.18">12345</text>
<text x="499.41" y="755.10" font-size="16.00" fill="#555" textLength="19.87" lengthAdjust="spacingAndGlyphs" stroke="#555" stroke-width="0.18">J30</text>
<text x="621.48" y="755.10" font-size="16.00" fill="#555" textLength="54.69" lengthAdjust="spacingAndGlyphs" stroke="#555" stroke-width="0.18">DAPIBUS</text>
<text x="800.63" y="755.10" font-size="16.00" fill="#555" textLength="24.43" lengthAdjust="spacingAndGlyphs" stroke="#555" stroke-width="0.18">PPC</text>
<text x="908.81" y="755.10" font-size="14.50" fill="#555" textLength="58.24" lengthAdjust="spacingAndGlyphs" stroke="#555" stroke-width="0.18">28/07/2019</text>
<text x="1063.34" y="756.80" font-size="17.00" fill="#555" textLength="14.78" lengthAdjust="spacingAndGlyphs" font-weight="bold" stroke="#555" stroke-width="0.10">54</text>
<text x="1263.08" y="755.10" font-size="16.00" fill="#555" textLength="25.00" lengthAdjust="spacingAndGlyphs" stroke="#555" stroke-width="0.18">Non</text>
<text x="1391.90" y="755.10" font-size="16.00" fill="#555" textLength="19.86" lengthAdjust="spacingAndGlyphs" stroke="#555" stroke-width="0.18">Oui</text>
<text x="69.84" y="816.10" font-size="14.20" fill="#555" textLength="7.23" lengthAdjust="spacingAndGlyphs" stroke="#555" stroke-width="0.18">6</text>
<text x="122.96" y="817.00" font-size="14.80" fill="#555" textLength="36.90" lengthAdjust="spacingAndGlyphs" stroke="#555" stroke-width="0.18">132242</text>
<text x="234.68" y="806.60" font-size="16.00" fill="#555" textLength="56.35" lengthAdjust="spacingAndGlyphs" stroke="#555" stroke-width="0.18">ALIQUAM</text>
<text x="233.64" y="826.10" font-size="12.80" fill="#555" textLength="43.48" lengthAdjust="spacingAndGlyphs" stroke="#555" stroke-width="0.18">Inceptos</text>
<text x="395.24" y="806.60" font-size="15.30" fill="#555" textLength="68.38" lengthAdjust="spacingAndGlyphs" stroke="#555" stroke-width="0.18">consectetur</text>
<text x="394.94" y="826.10" font-size="14.20" fill="#555" textLength="31.33" lengthAdjust="spacingAndGlyphs" stroke="#555" stroke-width="0.18">12345</text>
<text x="498.51" y="816.10" font-size="16.00" fill="#555" textLength="33.55" lengthAdjust="spacingAndGlyphs" stroke="#555" stroke-width="0.18">IRC60</text>
<text x="621.98" y="816.10" font-size="16.00" fill="#555" textLength="143.34" lengthAdjust="spacingAndGlyphs" stroke="#555" stroke-width="0.18">SODALES CONSECTETUR</text>
<text x="801.07" y="816.10" font-size="16.00" fill="#555" textLength="23.78" lengthAdjust="spacingAndGlyphs" stroke="#555" stroke-width="0.18">OXY</text>
<text x="908.81" y="816.10" font-size="14.50" fill="#555" textLength="58.24" lengthAdjust="spacingAndGlyphs" stroke="#555" stroke-width="0.18">27/08/2019</text>
<text x="1063.15" y="817.80" font-size="17.00" fill="#555" textLength="15.47" lengthAdjust="spacingAndGlyphs" font-weight="bold" stroke="#555" stroke-width="0.10">70</text>
<text x="1263.08" y="816.10" font-size="16.00" fill="#555" textLength="25.00" lengthAdjust="spacingAndGlyphs" stroke="#555" stroke-width="0.18">Non</text>
<text x="1391.38" y="816.10" font-size="16.00" fill="#555" textLength="25.00" lengthAdjust="spacingAndGlyphs" stroke="#555" stroke-width="0.18">Non</text>
</svg>
</body></html>
